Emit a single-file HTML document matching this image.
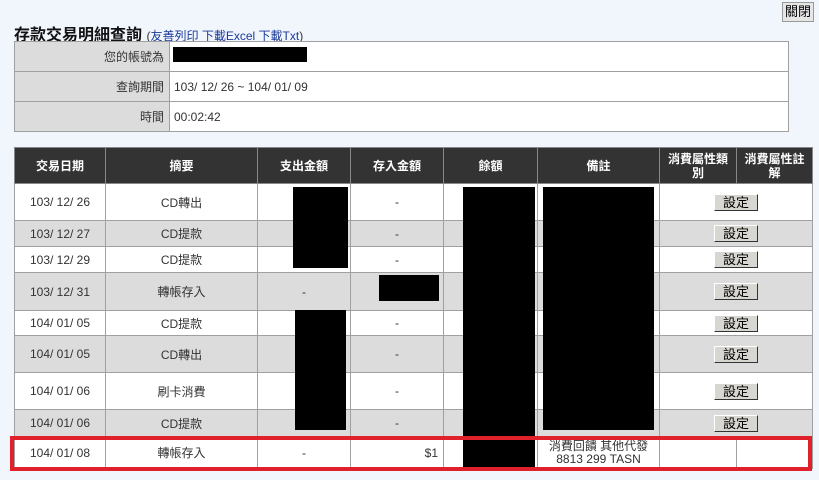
<!DOCTYPE html>
<html><head><meta charset="utf-8"><style>
body{margin:0;width:819px;height:480px;background:#f1f5fc;font-family:"Liberation Sans","Noto Sans CJK TC",sans-serif;position:relative;overflow:hidden;font-size:12px;color:#333}
.a{position:absolute}
.blk{position:absolute;background:#000}
table{border-collapse:collapse;position:absolute}
td,th{border:1px solid #a0a0a0;padding:0;text-align:center}
.info td{height:29px;font-size:12px;color:#333}
.info td.l{background:#dcdcdc;text-align:right;padding-right:5px}
.info td.r{background:#fff;text-align:left;padding-left:4px}
.main th{background:#333;color:#fff;font-weight:bold;font-size:12px;border-color:#888;line-height:14px}
.main tr.g td{background:#dcdcdc}
.main tr.w td{background:#fff}
.btn{display:inline-block;width:42px;height:15px;background:#d8d6d0;border:1px solid;border-color:#fff #333 #333 #fff;font-size:13px;line-height:15px;color:#000}
</style></head><body>
<div class="a" style="left:14px;top:21px;font-size:16px;font-weight:bold;color:#111">存款交易明細查詢 <span style="font-size:12px;font-weight:normal;color:#333">(<u style="color:#1a3a9a">友善列印</u> <u style="color:#1a3a9a">下載Excel</u> <u style="color:#1a3a9a">下載Txt</u>)</span></div>
<div class="a" style="left:782px;top:2px;width:30px;height:18px;background:#e6e6e6;border:1px solid #999;font-size:13px;line-height:18px;text-align:center;color:#000">關閉</div>
<table class="info" style="left:14px;top:41px;width:775px">
<tr><td class="l" style="width:149px">您的帳號為</td><td class="r"></td></tr>
<tr><td class="l">查詢期間</td><td class="r">103/ 12/ 26 ~ 104/ 01/ 09</td></tr>
<tr><td class="l">時間</td><td class="r">00:02:42</td></tr>
</table>
<div class="blk" style="left:173px;top:47px;width:134px;height:15px"></div>
<table class="main" style="left:14px;top:147px;width:799px">
<tr style="height:36px"><th style="width:90px">交易日期</th><th style="width:151px">摘要</th><th style="width:92px">支出金額</th><th style="width:92px">存入金額</th><th style="width:93px">餘額</th><th style="width:121px">備註</th><th style="width:76px">消費屬性類<br>別</th><th>消費屬性註<br>解</th></tr>
<tr class="w" style="height:37px"><td>103/ 12/ 26</td><td>CD轉出</td><td></td><td>-</td><td></td><td></td><td colspan="2"><span class="btn">設定</span></td></tr>
<tr class="g" style="height:26px"><td>103/ 12/ 27</td><td>CD提款</td><td></td><td>-</td><td></td><td></td><td colspan="2"><span class="btn">設定</span></td></tr>
<tr class="w" style="height:26px"><td>103/ 12/ 29</td><td>CD提款</td><td></td><td>-</td><td></td><td></td><td colspan="2"><span class="btn">設定</span></td></tr>
<tr class="g" style="height:38px"><td>103/ 12/ 31</td><td>轉帳存入</td><td>-</td><td></td><td></td><td></td><td colspan="2"><span class="btn">設定</span></td></tr>
<tr class="w" style="height:25px"><td>104/ 01/ 05</td><td>CD提款</td><td></td><td>-</td><td></td><td></td><td colspan="2"><span class="btn">設定</span></td></tr>
<tr class="g" style="height:37px"><td>104/ 01/ 05</td><td>CD轉出</td><td></td><td>-</td><td></td><td></td><td colspan="2"><span class="btn">設定</span></td></tr>
<tr class="w" style="height:37px"><td>104/ 01/ 06</td><td>刷卡消費</td><td></td><td>-</td><td></td><td></td><td colspan="2"><span class="btn">設定</span></td></tr>
<tr class="g" style="height:27px"><td>104/ 01/ 06</td><td>CD提款</td><td></td><td>-</td><td></td><td></td><td colspan="2"><span class="btn">設定</span></td></tr>
<tr class="w" style="height:32px"><td>104/ 01/ 08</td><td>轉帳存入</td><td>-</td><td style="text-align:right;padding-right:5px">$1</td><td></td><td style="line-height:13px">消費回饋 其他代發<br>8813 299 TASN</td><td style="width:76px"></td><td></td></tr>
</table>
<div class="blk" style="left:293px;top:187px;width:55px;height:81px"></div>
<div class="blk" style="left:295px;top:310px;width:51px;height:120px"></div>
<div class="blk" style="left:379px;top:275px;width:60px;height:26px"></div>
<div class="blk" style="left:463px;top:187px;width:72px;height:280px"></div>
<div class="blk" style="left:543px;top:187px;width:111px;height:243px"></div>
<div class="a" style="left:10px;top:436px;width:794px;height:27px;border:4px solid #e0202a"></div>
</body></html>
